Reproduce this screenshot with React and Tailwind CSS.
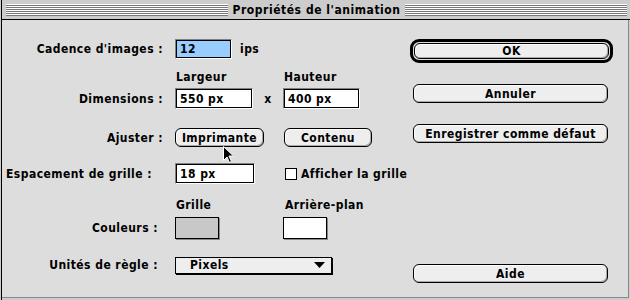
import React from 'react';

const font = "font-['DejaVu_Sans_Condensed','Liberation_Sans_Narrow','DejaVu_Sans',sans-serif] font-bold text-[12px] leading-[14px] tracking-[0.45px] text-black";

function Field({ className, children, selected }) {
  return (
    <div className={`border border-t-[#808080] border-l-[#808080] border-b-white border-r-white ${className}`}>
      <div className={`h-full border border-black bg-white ${selected ? '' : 'p-px'}`}>
        <div className={`h-full flex items-center ${selected ? 'bg-[#99ccff] px-[3px]' : 'px-[2px]'}`}>{children}</div>
      </div>
    </div>
  );
}

function Button({ className, children }) {
  return (
    <div className={`flex items-center justify-center rounded-[6px] border border-black bg-[#eeeeee] shadow-[inset_-1px_-1px_0_#aaaaaa,inset_1px_1px_0_#ffffff] ${className}`}>
      {children}
    </div>
  );
}

function Label({ className, children }) {
  return <div className={`w-[173px] shrink-0 text-right ${className}`}>{children}</div>;
}

export default function App() {
  return (
    <div className={`relative w-[630px] h-[300px] overflow-hidden bg-[#cccccc] ${font}`}>
      <div className="h-full ml-px border-l border-black flex flex-col">
        {/* Title bar */}
        <div className="h-[20px] shrink-0 border-b border-black bg-[#cccccc] flex items-center pl-[4px] pr-[3px]">
          <div className="flex-1 h-[12px] bg-[repeating-linear-gradient(to_bottom,#ffffff_0_1px,#777777_1px_2px)]" />
          <div className="px-[4px] leading-[14px] tracking-[0.55px]">Propriétés de l'animation</div>
          <div className="flex-1 h-[12px] bg-[repeating-linear-gradient(to_bottom,#ffffff_0_1px,#777777_1px_2px)]" />
        </div>

        {/* Body */}
        <div className="flex-1 mr-px mb-[2px] bg-[#dddddd] border-r border-b border-[#888888] flex">
          {/* Left form */}
          <div className="w-[408px] flex flex-col">
            <div className="mt-[19px] h-[20px] flex items-center">
              <Label className="pr-[12px]">Cadence d'images :</Label>
              <Field className="w-[57px] h-[20px]" selected>12</Field>
              <span className="ml-[8px]">ips</span>
            </div>

            <div className="mt-[11px] h-[14px] flex items-center pl-[174px]">
              <span className="w-[108px]">Largeur</span>
              <span>Hauteur</span>
            </div>

            <div className="mt-[4px] h-[21px] flex items-center">
              <Label className="pr-[12px]">Dimensions :</Label>
              <Field className="w-[78px] h-[21px]">550 px</Field>
              <span className="w-[30px] text-center">x</span>
              <Field className="w-[77px] h-[21px]">400 px</Field>
            </div>

            <div className="mt-[19px] h-[19px] flex items-center">
              <Label className="pr-[12px]">Ajuster :</Label>
              <Button className="w-[89px] h-[19px]">Imprimante</Button>
              <Button className="ml-[20px] w-[88px] h-[19px]">Contenu</Button>
            </div>

            <div className="mt-[16px] h-[21px] flex items-center">
              <Label className="pr-[23px]">Espacement de grille :</Label>
              <Field className="w-[80px] h-[21px]">18 px</Field>
              <div className="ml-[30px] w-[12px] h-[12px] border border-black bg-white" />
              <span className="ml-[4px]">Afficher la grille</span>
            </div>

            <div className="mt-[14px] h-[14px] flex items-center pl-[174px]">
              <span className="w-[109px]">Grille</span>
              <span>Arrière-plan</span>
            </div>

            <div className="mt-[5px] h-[22px] flex items-center">
              <Label className="pr-[17px]">Couleurs :</Label>
              <div className="w-[44px] h-[22px] border border-black bg-[#c8c8c8] shadow-[1px_1px_0_#888888]" />
              <div className="ml-[64px] w-[44px] h-[22px] border border-black bg-white shadow-[1px_1px_0_#888888]" />
            </div>

            <div className="mt-[17px] h-[18px] flex items-center">
              <Label className="pr-[17px]">Unités de règle :</Label>
              <div className="w-[157px] h-[17px] border border-black bg-[#eeeeee] shadow-[1px_1px_0_#000000] flex items-center pl-[14px] pr-[6px]">
                <span className="flex-1">Pixels</span>
                <svg width="11" height="6" viewBox="0 0 11 6">
                  <polygon points="0,0 11,0 5.5,6" fill="#000" />
                </svg>
              </div>
            </div>
          </div>

          {/* Right buttons */}
          <div className="w-[203px] flex flex-col">
            <div className="mt-[19px] h-[24px] rounded-[9px] border-[3px] border-black p-px">
              <Button className="h-full">OK</Button>
            </div>
            <Button className="mt-[21px] ml-[3px] mr-[5px] h-[19px]">Annuler</Button>
            <Button className="mt-[21px] ml-[3px] mr-[5px] h-[19px]">Enregistrer comme défaut</Button>
            <Button className="mt-[121px] ml-[3px] mr-[5px] h-[19px]">Aide</Button>
          </div>
        </div>
      </div>

      {/* Mouse cursor */}
      <svg className="absolute left-[223px] top-[146px]" width="12" height="18" viewBox="0 0 12 18">
        <path d="M0.5 0.5 L0.5 14.5 L4 11 L6.5 16.5 L8.5 15.5 L6 10 L10.5 10 Z" fill="#000" stroke="#fff" strokeWidth="1" />
      </svg>
    </div>
  );
}
